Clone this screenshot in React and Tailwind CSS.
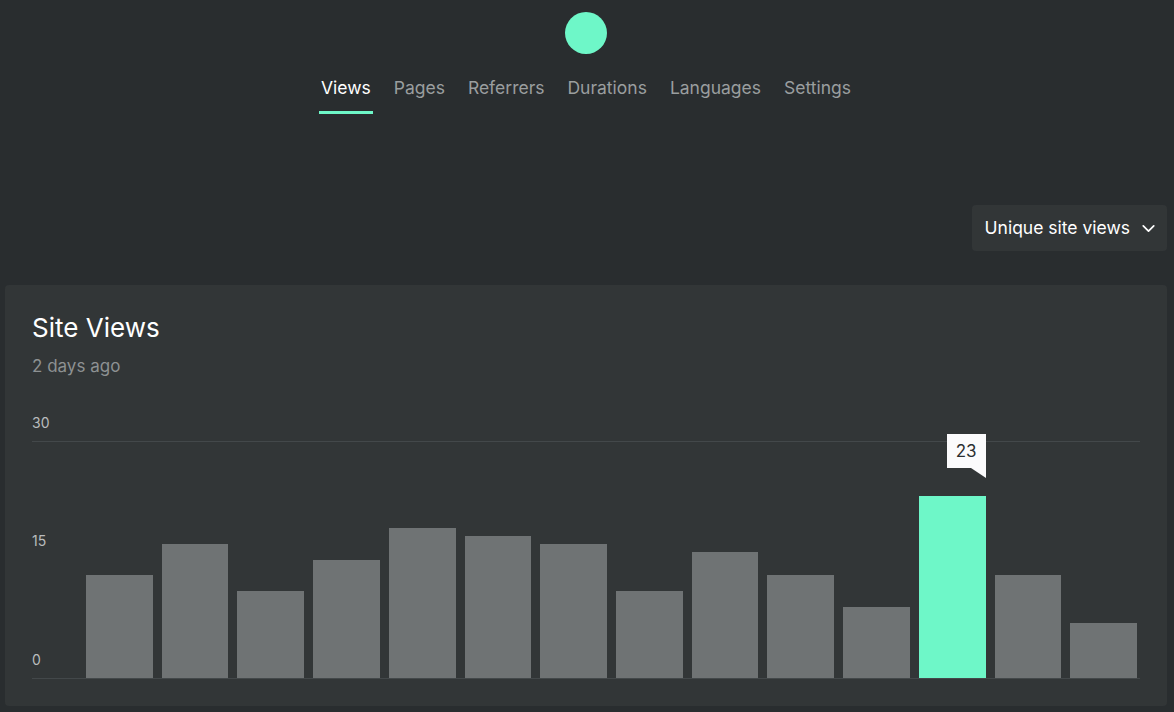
import { ChevronDown } from "lucide-react";

const tabs = ["Views", "Pages", "Referrers", "Durations", "Languages", "Settings"];

const views = [13, 17, 11, 15, 19, 18, 17, 11, 16, 13, 9, 23, 13, 7];
const MAX = 30;
const PLOT_H = 237;

export default function App() {
  return (
    <div className="min-h-screen bg-[#292d2f] text-white pl-[5px] pr-[7px] pb-[7px]" style={{ fontFamily: "Inter, 'Noto Sans', sans-serif" }}>
      {/* Header */}
      <div className="flex flex-col items-center pt-[12px]">
        <div className="w-[42px] h-[42px] rounded-full bg-[#6ef7c8]" />
        <nav className="flex gap-[19px] mt-[21px]">
          {tabs.map((t, i) => (
            <div
              key={t}
              className={`px-[2px] pb-[11px] text-[17.5px] leading-[25px] border-b-[3px] ${
                i === 0 ? "text-white border-[#6ef7c8]" : "text-[#9a9e9f] border-transparent"
              }`}
            >
              {t}
            </div>
          ))}
        </nav>
      </div>

      {/* Metric select */}
      <div className="flex justify-end mt-[91px]">
        <button className="flex items-center gap-[8px] h-[46px] pl-[13px] pr-[8px] rounded-[4px] bg-[#323637] text-[17.5px] text-white">
          Unique site views
          <ChevronDown size={21} strokeWidth={2} />
        </button>
      </div>

      {/* Card */}
      <div className="mt-[34px] rounded-[4px] bg-[#323637] px-[27px] pt-[27px] pb-[27px]">
        <h2 className="text-[26px] leading-[32px] text-white">Site Views</h2>
        <p className="mt-[10px] text-[17px] leading-[24px] text-[#8d9192]">2 days ago</p>

        <div className="mt-[35px] text-[14px] text-[#b9bcbd] leading-[20px]">30</div>
        <div className="relative mt-[8px] h-[238px] border-t border-b border-[#43484a]">
          <span className="absolute left-0 top-[89px] text-[14px] leading-[20px] text-[#b9bcbd]">15</span>
          <span className="absolute left-0 bottom-[8px] text-[14px] leading-[20px] text-[#b9bcbd]">0</span>
          <div className="absolute inset-0 pl-[54px] pr-[3px] flex items-end gap-[9px]">
            {views.map((v, i) => {
              const active = i === 11;
              return (
                <div key={i} className="relative flex-1 flex flex-col justify-end h-full">
                  {active && (
                    <div className="absolute right-0 flex flex-col items-end" style={{ bottom: (v / MAX) * PLOT_H + 18 }}>
                      <div className="w-[39px] h-[34px] bg-[#fbfbfc] text-[#2b2f31] text-[17px] flex items-center justify-center">{v}</div>
                      <div className="w-0 h-0 border-l-[15px] border-l-transparent border-t-[10px] border-t-[#fbfbfc]" />
                    </div>
                  )}
                  <div
                    className={active ? "bg-[#6ef7c8]" : "bg-[#6f7374]"}
                    style={{ height: (v / MAX) * PLOT_H }}
                  />
                </div>
              );
            })}
          </div>
        </div>
      </div>
    </div>
  );
}
